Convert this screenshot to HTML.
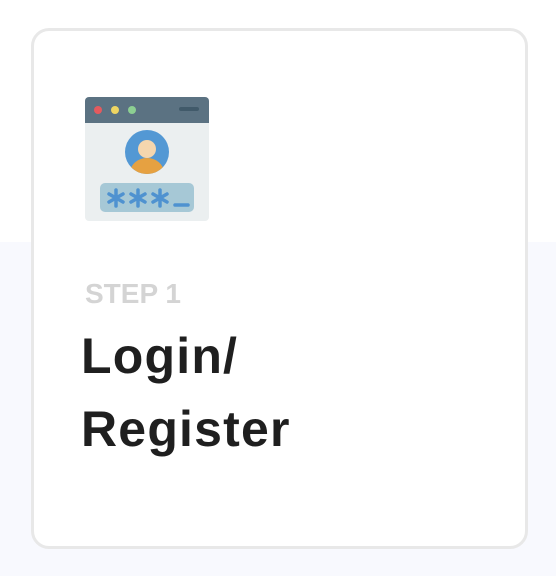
<!DOCTYPE html>
<html><head><style>
html,body{margin:0;padding:0}
body{width:556px;height:576px;position:relative;overflow:hidden;background:#fff;font-family:"Liberation Sans",sans-serif}
.bg{position:absolute;left:0;top:242px;width:556px;height:334px;background:#f8f9fe}
.card{position:absolute;left:31px;top:28px;width:491px;height:515px;border:3px solid #e8e8e8;border-radius:18px;background:#fff}
.step{position:absolute;left:85px;top:278px;font-size:28px;font-weight:bold;color:#d4d4d4;line-height:32px}
.title{position:absolute;left:81px;top:320px;font-size:50px;font-weight:bold;color:#1f1f1f;line-height:73px;letter-spacing:1.2px}
svg{position:absolute;left:85px;top:97px}
</style></head><body>
<div class="bg"></div>
<div class="card"></div>
<svg width="124" height="124" viewBox="0 0 124 124">
<defs><clipPath id="c"><circle cx="62" cy="55" r="22"/></clipPath></defs>
<rect x="0" y="0" width="124" height="124" rx="4" fill="#ebeff0"/>
<path d="M4 0H120A4 4 0 0 1 124 4V26H0V4A4 4 0 0 1 4 0Z" fill="#5b7282"/>
<circle cx="13" cy="13" r="4" fill="#e45a5e"/>
<circle cx="30" cy="13" r="4" fill="#eed562"/>
<circle cx="47" cy="13" r="4" fill="#8ccf92"/>
<rect x="94" y="10" width="20" height="4" rx="2" fill="#415a6a"/>
<circle cx="62" cy="55" r="22" fill="#5398d4"/>
<circle cx="62" cy="52" r="9" fill="#f5d6ae"/>
<ellipse cx="62" cy="76" rx="17" ry="15" fill="#e6a141" clip-path="url(#c)"/>
<rect x="15" y="86" width="94" height="29" rx="5" fill="#a6c8d6"/>
<g stroke="#4f92d0" stroke-width="3.5" stroke-linecap="round">
<path d="M31 93V109M24 97L38 105M24 105L38 97"/>
<path d="M53 93V109M46 97L60 105M46 105L60 97"/>
<path d="M75 93V109M68 97L82 105M68 105L82 97"/>
<path d="M90 108H103"/>
</g>
</svg>
<div class="step">STEP 1</div>
<div class="title">Login/<br>Register</div>
</body></html>
